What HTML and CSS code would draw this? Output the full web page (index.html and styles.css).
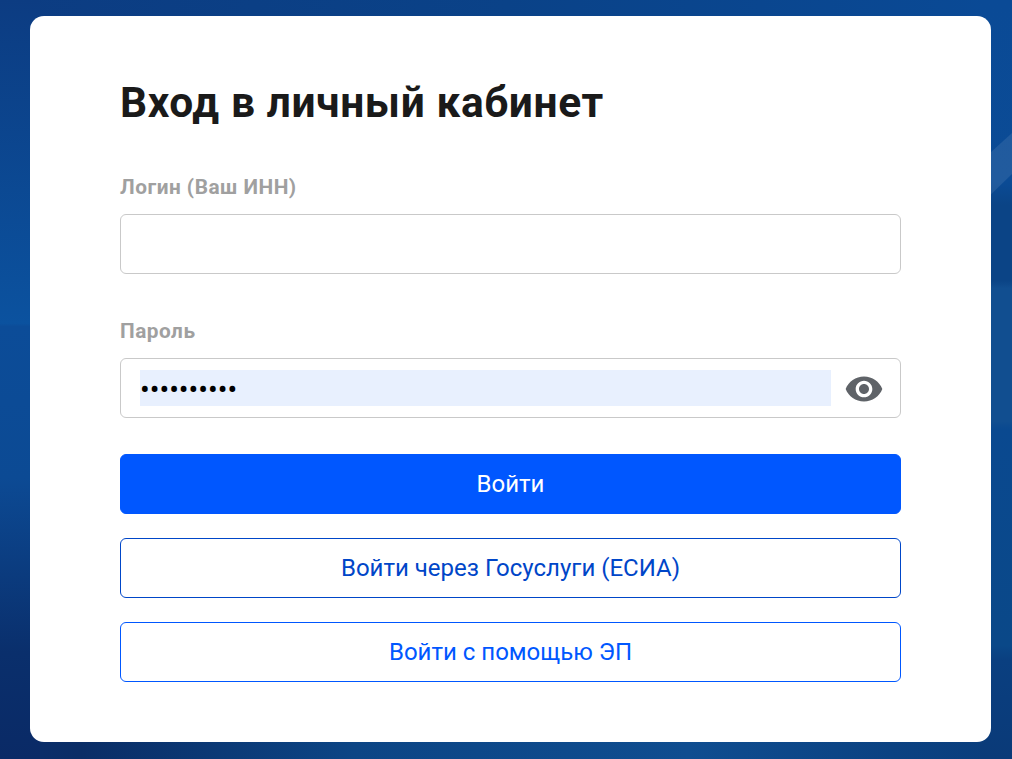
FILE: index.html
```html
<!DOCTYPE html>
<html lang="ru">
<head>
<meta charset="utf-8">
<title>Вход в личный кабинет</title>
<link rel="stylesheet" href="styles.css">
</head>
<body>
<svg class="backdrop" viewBox="0 0 1012 759" preserveAspectRatio="none" aria-hidden="true">
  <defs>
    <linearGradient id="top" x1="0" y1="0" x2="1" y2="0">
      <stop offset="0" stop-color="#0c3c82"/>
      <stop offset=".5" stop-color="#0a4288"/>
      <stop offset="1" stop-color="#0a4a96"/>
    </linearGradient>
    <linearGradient id="bottom" x1="0" y1="0" x2="1" y2="0">
      <stop offset="0" stop-color="#0a2f6c"/>
      <stop offset=".08" stop-color="#0a2d66"/>
      <stop offset=".35" stop-color="#0c4585"/>
      <stop offset=".68" stop-color="#0f4d90"/>
      <stop offset=".88" stop-color="#0b4282"/>
      <stop offset="1" stop-color="#0a3d7c"/>
    </linearGradient>
    <linearGradient id="left" x1="0" y1="0" x2="0" y2="1">
      <stop offset="0" stop-color="#0c3c82"/>
      <stop offset=".426" stop-color="#0b529f"/>
      <stop offset=".43" stop-color="#0c4c98"/>
      <stop offset=".63" stop-color="#0c4a94"/>
      <stop offset=".86" stop-color="#0a2f6c"/>
      <stop offset="1" stop-color="#0a2a66"/>
    </linearGradient>
    <linearGradient id="right" x1="0" y1="0" x2="0" y2="1">
      <stop offset="0" stop-color="#0a4a96"/>
      <stop offset=".24" stop-color="#0b4b95"/>
      <stop offset=".27" stop-color="#0b4486"/>
      <stop offset=".37" stop-color="#0b4486"/>
      <stop offset=".38" stop-color="#114e90"/>
      <stop offset=".555" stop-color="#114e90"/>
      <stop offset=".565" stop-color="#0a4990"/>
      <stop offset=".85" stop-color="#0a4888"/>
      <stop offset=".87" stop-color="#0a3f80"/>
      <stop offset="1" stop-color="#0a3a78"/>
    </linearGradient>
  </defs>
  <rect width="1012" height="759" fill="#0b4690"/>
  <rect width="1012" height="40" fill="url(#top)"/>
  <rect y="720" width="1012" height="39" fill="url(#bottom)"/>
  <rect width="40" height="759" fill="url(#left)"/>
  <rect x="980" width="32" height="759" fill="url(#right)"/>
  <polygon points="980,162 1012,133 1012,174 980,205" fill="#fff" opacity=".09"/>
</svg>
<main class="card">
  <h1 class="title">Вход в личный кабинет</h1>
  <form class="form">
    <div class="field field-login">
      <label class="label">Логин (Ваш ИНН)</label>
      <div class="input"></div>
    </div>
    <div class="field">
      <label class="label">Пароль</label>
      <div class="input input-password">
        <span class="autofill">••••••••••</span>
        <svg class="eye" width="40" height="40" viewBox="0 -0.6 24 24" aria-hidden="true"><path fill="#5f6368" d="M12 4.500C7 4.500 2.730 7.610 1 12c1.730 4.390 6 7.500 11 7.500s9.270-3.110 11-7.500c-1.730-4.390-6-7.500-11-7.500zM12 17c-2.760 0-5-2.240-5-5s2.240-5 5-5 5 2.240 5 5-2.240 5-5 5zm0-8c-1.660 0-3 1.340-3 3s1.340 3 3 3 3-1.340 3-3-1.340-3-3-3z"/></svg>
      </div>
    </div>
    <div class="actions">
      <button type="button" class="btn btn-primary">Войти</button>
      <button type="button" class="btn btn-outline btn-esia">Войти через Госуслуги (ЕСИА)</button>
      <button type="button" class="btn btn-outline">Войти с помощью ЭП</button>
    </div>
  </form>
</main>
</body>
</html>
```
FILE: styles.css
```css
* { box-sizing: border-box; }
html, body { height: 100%; }
body {
  margin: 0;
  padding: 16px 21px 17px 30px;
  font-family: Roboto, "Liberation Sans", sans-serif;
  overflow: hidden;
  background: #0b4690;
}
.backdrop {
  position: fixed;
  inset: 0;
  width: 100%;
  height: 100%;
  z-index: -1;
}
.card {
  height: 726px;
  background: #fff;
  border-radius: 14px;
  padding: 58px 90px 0;
}
.title {
  margin: 0 0 43px;
  font-size: 42.5px;
  line-height: 58px;
  font-weight: 700;
  letter-spacing: 0.6px;
  color: #1a1a1a;
}
.form { display: flex; flex-direction: column; }
.field { margin-bottom: 36px; }
.field-login { margin-bottom: 45px; }
.label {
  display: block;
  font-size: 20.8px;
  line-height: 24px;
  font-weight: 700;
  letter-spacing: 0.5px;
  color: #a0a0a0;
  margin-bottom: 15px;
}
.input {
  height: 60px;
  border: 1px solid #c9c9c9;
  border-radius: 6px;
  background: #fff;
}
.input-password {
  display: flex;
  align-items: center;
  justify-content: space-between;
  padding: 0 16px 0 19px;
}
.autofill {
  width: 691px;
  height: 36px;
  background: #e8f0fe;
  color: #000;
  font-size: 28.8px;
  line-height: 40px;
}
.eye { flex: none; }
.actions { display: flex; flex-direction: column; gap: 24px; }
.btn {
  height: 60px;
  border-radius: 6px;
  font-family: inherit;
  font-size: 24px;
  font-weight: 400;
  background: #fff;
  padding: 0;
}
.btn-primary { background: #0057ff; border: 1px solid #0057ff; color: #fff; }
.btn-outline { border: 1px solid #0057ff; color: #0057ff; }
.btn-esia { color: #0046c8; border-color: #0046c8; }
```
